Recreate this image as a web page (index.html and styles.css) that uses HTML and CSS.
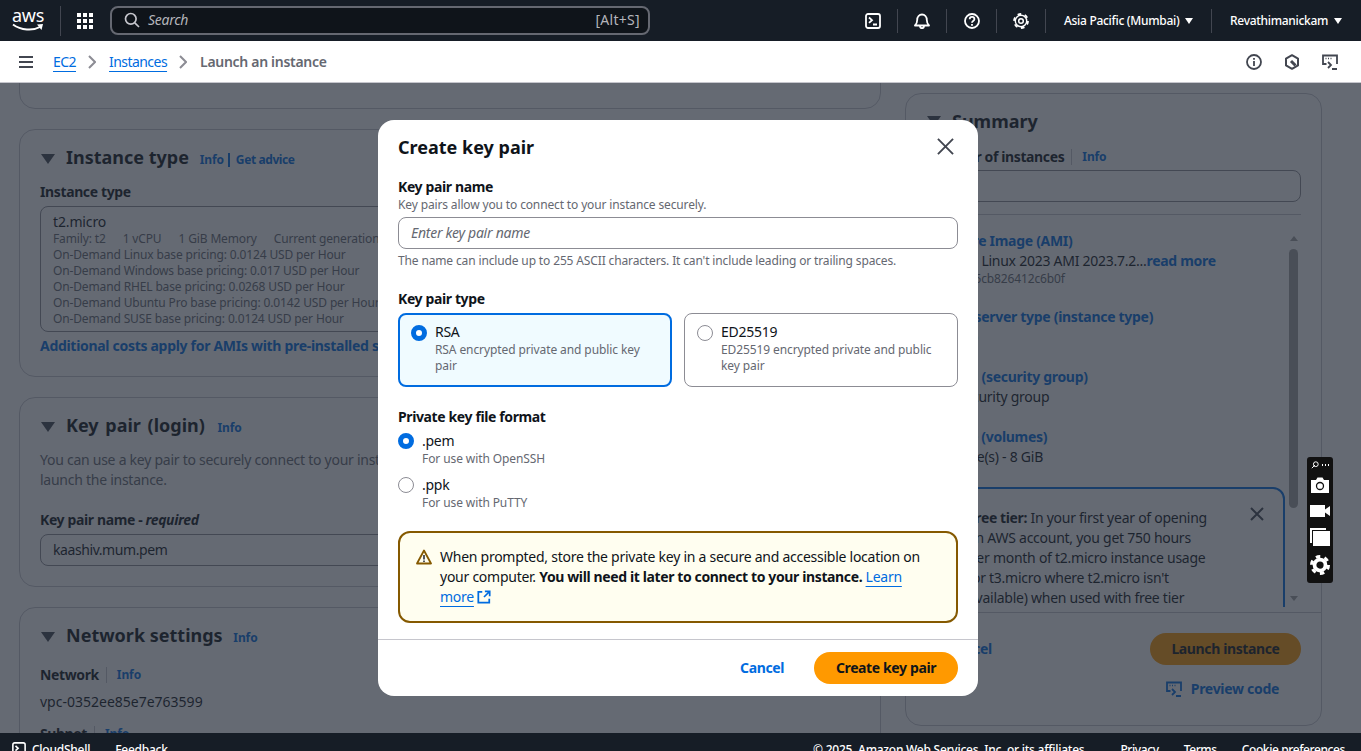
FILE: index.html

```html
<!DOCTYPE html>
<html>
<head>
  <meta charset="utf-8">
  <title>Launch an instance | EC2</title>
  <link rel="stylesheet" href="styles.css">
</head>
<body>
  <header class="topbar">
    <a class="aws-logo">
      <span class="aws-word">aws</span>
      <svg class="aws-smile" viewBox="0 0 32 9"><path d="M1 1.5c8 6 20 6.500 27 2.500" fill="none" stroke="#fff" stroke-width="2"/><path d="M25 1.500l6 -0.500-1.500 6z" fill="#fff"/></svg>
    </a>
    <span class="top-sep first"></span>
    <svg class="grid-icon" viewBox="0 0 16 16" fill="#fff">
      <rect x="0" y="0" width="4" height="4"/><rect x="6" y="0" width="4" height="4"/><rect x="12" y="0" width="4" height="4"/>
      <rect x="0" y="6" width="4" height="4"/><rect x="6" y="6" width="4" height="4"/><rect x="12" y="6" width="4" height="4"/>
      <rect x="0" y="12" width="4" height="4"/><rect x="6" y="12" width="4" height="4"/><rect x="12" y="12" width="4" height="4"/>
    </svg>
    <div class="search">
      <svg class="icon-16" viewBox="0 0 16 16" fill="none" stroke="#c6c6cd" stroke-width="1.700"><circle cx="6.800" cy="6.800" r="5.300"/><path d="M10.800 10.800L15 15"/></svg>
      <span class="search-text">Search</span>
      <span class="search-key">[Alt+S]</span>
    </div>
    <div class="top-actions">
      <a class="top-icon"><svg class="icon-16" viewBox="0 0 16 16" fill="none" stroke="#fff" stroke-width="1.800"><rect x="1" y="1" width="14" height="14" rx="2"/><path d="M4 4.500l3 2.700-3 2.700M8 11.500h4"/></svg></a>
      <a class="top-icon"><svg class="icon-16" viewBox="0 0 16 16" fill="none" stroke="#fff" stroke-width="1.800" stroke-linejoin="round"><path d="M1 12.500h14c-1.500-1.500-2.200-2.500-2.200-5.500 0-3-2-5.500-4.800-5.500S3.200 4 3.200 7c0 3-.7 4-2.200 5.500z"/><path d="M6 13c0 3 4 3 4 0"/></svg></a>
      <a class="top-icon"><svg class="icon-16" viewBox="0 0 16 16" fill="none" stroke="#fff" stroke-width="1.800"><circle cx="8" cy="8" r="7"/><path d="M5.700 6.200c0-3 4.700-3 4.700 0 0 1.900-2.400 1.800-2.400 3.500"/><path d="M8 11v1.700"/></svg></a>
      <a class="top-icon"><svg class="icon-16" viewBox="0 0 16 16" fill="none" stroke="#fff"><circle cx="8" cy="8" r="5.700" stroke-width="1.400"/><circle cx="8" cy="8" r="7" stroke-width="1.800" stroke-dasharray="3.660 3.670"/><circle cx="8" cy="8" r="2.300" stroke-width="1.500"/></svg></a>
      <a class="top-menu region">Asia Pacific (Mumbai)<span class="menu-caret"></span></a>
      <a class="top-menu account">Revathimanickam<span class="menu-caret"></span></a>
    </div>
  </header>

  <nav class="crumbbar">
    <svg class="menu-icon" viewBox="0 0 14 12" fill="none" stroke="#424650" stroke-width="2"><path d="M0 1h14M0 6h14M0 11h14"/></svg>
    <a class="crumb-link">EC2</a>
    <svg class="crumb-chev" viewBox="0 0 8 14" fill="none" stroke="#8c8c94" stroke-width="2"><path d="M1 1l6 6-6 6"/></svg>
    <a class="crumb-link">Instances</a>
    <svg class="crumb-chev" viewBox="0 0 8 14" fill="none" stroke="#8c8c94" stroke-width="2"><path d="M1 1l6 6-6 6"/></svg>
    <span class="crumb-current">Launch an instance</span>
    <div class="crumb-tools">
      <svg class="icon-16" viewBox="0 0 16 16" fill="none" stroke="#424650" stroke-width="1.800"><circle cx="8" cy="8" r="7"/><path d="M8 7v5M8 4v1.800"/></svg>
      <svg class="icon-16" viewBox="0 0 16 16" fill="none" stroke="#424650" stroke-width="2" stroke-linejoin="round"><path d="M8 1.200l6 3.400v6.800l-6 3.400-6-3.400V4.600z"/><path d="M7 7l4.500 4.500" stroke-width="3"/></svg>
      <svg class="icon-16" viewBox="0 0 16 16" fill="none" stroke="#424650" stroke-width="1.800"><path d="M15 10V1.500H1V10h3.500"/><path d="M6 8l3 3-3 3M10 15h5"/><path d="M3.500 4.500h1M6 4.500h1M8.500 4.500h1" stroke-width="1.500"/></svg>
    </div>
  </nav>

  <div class="main">
    <div class="page-grid">
      <div class="left-col">
        <section class="card stub-card"></section>

        <section class="card type-card">
          <h2 class="card-head"><span class="caret"></span>Instance type <span class="info">Info</span> <span class="info advice">Get advice</span></h2>
          <div class="field-label">Instance type</div>
          <div class="type-select">
            <div class="type-name">t2.micro</div>
            <div class="type-meta"><span>Family: t2</span><span>1 vCPU</span><span>1 GiB Memory</span><span>Current generation: true</span></div>
            <div class="type-line">On-Demand Linux base pricing: 0.0124 USD per Hour</div>
            <div class="type-line">On-Demand Windows base pricing: 0.017 USD per Hour</div>
            <div class="type-line">On-Demand RHEL base pricing: 0.0268 USD per Hour</div>
            <div class="type-line">On-Demand Ubuntu Pro base pricing: 0.0142 USD per Hour</div>
            <div class="type-line">On-Demand SUSE base pricing: 0.0124 USD per Hour</div>
          </div>
          <a class="strong-link">Additional costs apply for AMIs with pre-installed software</a>
        </section>

        <section class="card login-card">
          <h2 class="card-head login-head"><span class="caret"></span>Key pair (login) <span class="info">Info</span></h2>
          <p class="login-text">You can use a key pair to securely connect to your instance. Ensure that you have access to the selected key pair before you<br>launch the instance.</p>
          <div class="field-label login-label">Key pair name - <em>required</em></div>
          <div class="login-select">kaashiv.mum.pem</div>
        </section>

        <section class="card network-card">
          <h2 class="card-head"><span class="caret"></span>Network settings <span class="info">Info</span></h2>
          <div class="field-label inline-label"><span>Network</span><span class="label-sep"></span><span class="info">Info</span></div>
          <div class="net-value">vpc-0352ee85e7e763599</div>
          <div class="field-label inline-label subnet"><span>Subnet</span><span class="label-sep"></span><span class="info">Info</span></div>
        </section>
      </div>

      <aside class="card summary">
        <h2 class="card-head summary-head"><span class="caret"></span>Summary</h2>
        <div class="field-label inline-label count-label"><span>Number of instances</span><span class="label-sep"></span><span class="info">Info</span></div>
        <div class="count-input">1</div>
        <div class="summary-line"></div>
        <div class="summary-scroll">
          <a class="strong-link sum-title">Software Image (AMI)</a>
          <div class="sum-text">Amazon Linux 2023 AMI 2023.7.2...<a class="strong-link">read more</a></div>
          <div class="sum-id">ami-0f555cb826412c6b0f</div>
          <a class="strong-link sum-title next">Virtual server type (instance type)</a>
          <div class="sum-text">t2.micro</div>
          <a class="strong-link sum-title next">Firewall (security group)</a>
          <div class="sum-text">New security group</div>
          <a class="strong-link sum-title next">Storage (volumes)</a>
          <div class="sum-text">1 volume(s) - 8 GiB</div>
          <div class="free-tier">
            <svg class="free-close" viewBox="0 0 14 14" fill="none" stroke="#424650" stroke-width="2"><path d="M1 1l12 12M13 1L1 13"/></svg>
            <p><b>Free tier:</b> In your first year of opening<br>an AWS account, you get 750 hours<br>per month of t2.micro instance usage<br>(or t3.micro where t2.micro isn't<br>available) when used with free tier</p>
          </div>
          <div class="fake-scroll">
            <span class="scroll-up"></span>
            <span class="scroll-thumb"></span>
            <span class="scroll-down"></span>
          </div>
        </div>
        <div class="summary-foot">
          <div class="foot-row">
            <a class="strong-link">Cancel</a>
            <span class="launch-btn">Launch instance</span>
          </div>
          <a class="strong-link preview">
            <svg class="icon-16" viewBox="0 0 16 16" fill="none" stroke="#006ce0" stroke-width="1.800"><path d="M15 10V1.500H1V10h3.500"/><path d="M6 8l3 3-3 3M10 15h5"/><path d="M3.500 4.500h1M6 4.500h1M8.500 4.500h1" stroke-width="1.500"/></svg>
            Preview code
          </a>
        </div>
      </aside>
    </div>

    <div class="overlay">
      <div class="modal">
        <div class="modal-head">
          <h2>Create key pair</h2>
          <svg class="modal-close" viewBox="0 0 18 18" fill="none" stroke="#424650" stroke-width="2"><path d="M1 1l16 16M17 1L1 17"/></svg>
        </div>
        <div class="modal-body">
          <label class="m-label" for="key-name">Key pair name</label>
          <div class="m-desc">Key pairs allow you to connect to your instance securely.</div>
          <input class="m-input" id="key-name" type="text" placeholder="Enter key pair name">
          <div class="m-desc hint">The name can include up to 255 ASCII characters. It can't include leading or trailing spaces.</div>

          <div class="m-label type-label">Key pair type</div>
          <div class="tiles">
            <label class="tile selected">
              <input type="radio" name="kind" checked>
              <span class="tile-text"><span class="opt-name">RSA</span><span class="opt-desc">RSA encrypted private and public key pair</span></span>
            </label>
            <label class="tile">
              <input type="radio" name="kind">
              <span class="tile-text"><span class="opt-name">ED25519</span><span class="opt-desc">ED25519 encrypted private and public key pair</span></span>
            </label>
          </div>

          <div class="m-label format-label">Private key file format</div>
          <label class="format-opt">
            <input type="radio" name="format" checked>
            <span class="tile-text"><span class="opt-name">.pem</span><span class="opt-desc">For use with OpenSSH</span></span>
          </label>
          <label class="format-opt">
            <input type="radio" name="format">
            <span class="tile-text"><span class="opt-name">.ppk</span><span class="opt-desc">For use with PuTTY</span></span>
          </label>

          <div class="alert">
            <svg class="alert-icon" viewBox="0 0 16 16" fill="none" stroke="#855900" stroke-width="1.800" stroke-linejoin="round"><path d="M8 1.500L15 14.500H1z"/><path d="M8 6v4.500M8 11.500v1.500" stroke="#424650"/></svg>
            <p>When prompted, store the private key in a secure and accessible location on your computer. <b>You will need it later to connect to your instance.</b> <a class="alert-link">Learn more</a> <svg class="ext-icon" viewBox="0 0 16 16" fill="none" stroke="#006ce0" stroke-width="2"><path d="M6 2H1.500v12.500H14V10"/><path d="M8 8l6-6M9 1.500h5.500V7"/></svg></p>
          </div>
        </div>
        <div class="modal-foot">
          <a class="m-cancel">Cancel</a>
          <button class="m-create">Create key pair</button>
        </div>
      </div>
    </div>

    <div class="capture-bar">
      <div class="capture-top">
        <svg class="capture-link" viewBox="0 0 10 10" fill="none" stroke="#fff" stroke-width="1.200"><circle cx="6" cy="4" r="3"/><path d="M1 9l4-4"/></svg>
        <span class="capture-dots"></span>
      </div>
      <svg class="capture-icon" viewBox="0 0 20 16"><path d="M1 3h5l1.500-2.500h5L14 3h5v13H1z" fill="#fff"/><circle cx="10" cy="9" r="3.500" fill="none" stroke="#111" stroke-width="1.300"/></svg>
      <svg class="capture-icon" viewBox="0 0 20 16"><path d="M0 2h15v12H0zM15 6.500L20 3v10l-5-3.500z" fill="#fff"/></svg>
      <svg class="capture-icon" viewBox="0 0 20 18"><path d="M0 0h16v2H2v13H0z" fill="#fff"/><path d="M3 3h17v15H3z" fill="#fff"/></svg>
      <svg class="capture-icon gear" viewBox="0 0 16 16" fill="none" stroke="#fff"><circle cx="8" cy="8" r="4.400" stroke-width="3"/><circle cx="8" cy="8" r="6.800" stroke-width="2.400" stroke-dasharray="3.560 3.560"/></svg>
    </div>
  </div>

  <footer class="bottombar">
    <svg class="shell-icon" viewBox="0 0 16 16" fill="none" stroke="#fff" stroke-width="1.800"><rect x="1" y="1" width="14" height="14" rx="2"/><path d="M4 4.500l3 2.700-3 2.700M8 11.500h4"/></svg>
    <a class="cloudshell">CloudShell</a>
    <a class="feedback">Feedback</a>
    <div class="bottom-right">
      <span class="copyright">© 2025, Amazon Web Services, Inc. or its affiliates.</span>
      <a>Privacy</a>
      <a>Terms</a>
      <a>Cookie preferences</a>
    </div>
  </footer>
</body>
</html>
```

FILE: styles.css

```css
* {
  box-sizing: border-box;
}
html, body {
  height: 100%;
}
body {
  margin: 0;
  display: flex;
  flex-direction: column;
  overflow: hidden;
  font-family: "Noto Sans", "Open Sans", sans-serif;
  font-size: 14px;
  line-height: 20px;
  letter-spacing: -0.26px;
  color: #0f141a;
  background: #fff;
}
b {
  font-weight: 700;
  letter-spacing: -0.38px;
}
.icon-16 {
  width: 16px;
  height: 16px;
  flex: none;
}

/* top bar */
.topbar {
  height: 41px;
  flex: none;
  display: flex;
  align-items: center;
  padding-left: 12px;
  background: #161d26;
  color: #fff;
}
.aws-logo {
  width: 32px;
  height: 30px;
  display: flex;
  flex-direction: column;
  align-items: center;
}
.aws-word {
  font-size: 18px;
  line-height: 18px;
  letter-spacing: -0.3px;
}
.aws-smile {
  width: 32px;
  height: 9px;
  margin-top: -1px;
}
.top-sep.first {
  width: 1px;
  height: 30px;
  margin-left: 16px;
  background: #424650;
}
.grid-icon {
  width: 16px;
  height: 16px;
  margin-left: 16px;
}
.search {
  width: 540px;
  height: 29px;
  margin-left: 17px;
  padding: 0 8px 2px 12px;
  display: flex;
  align-items: center;
  gap: 8px;
  background: #0f141a;
  border: 2px solid #656871;
  border-radius: 8px;
  color: #b4b4bb;
}
.search-text {
  flex: 1;
  font-style: italic;
}
.search-key {
  letter-spacing: 0.3px;
}
.top-actions {
  margin-left: auto;
  display: flex;
  align-items: center;
  height: 100%;
}
.top-icon {
  width: 49.500px;
  height: 24px;
  padding-left: 1px;
  display: flex;
  align-items: center;
  justify-content: center;
  border-right: 1px solid #424650;
}
.top-menu {
  height: 24px;
  display: flex;
  align-items: center;
  font-size: 12px;
  font-weight: 500;
  letter-spacing: -0.3px;
}
.region {
  width: 166px;
  padding-left: 18px;
  border-right: 1px solid #424650;
}
.account {
  width: 149px;
  padding-left: 18px;
}
.menu-caret {
  width: 0;
  height: 0;
  margin-left: 6px;
  border-left: 4.500px solid transparent;
  border-right: 4.500px solid transparent;
  border-top: 6px solid #fff;
}

/* breadcrumb bar */
.crumbbar {
  height: 42px;
  flex: none;
  display: flex;
  align-items: center;
  padding: 0 23px 0 19px;
  background: #fff;
  border-bottom: 1px solid #c6c6cd;
}
.menu-icon {
  width: 14px;
  height: 12px;
  margin-right: 20px;
}
.crumb-link {
  color: #006ce0;
  text-decoration: underline;
  text-underline-offset: 4px;
  letter-spacing: -0.55px;
}
.crumb-chev {
  width: 8px;
  height: 14px;
  margin: 0 13px 0 12px;
}
.crumb-current {
  font-weight: 600;
  color: #656871;
  letter-spacing: -0.3px;
}
.crumb-tools {
  margin-left: auto;
  display: flex;
  gap: 22px;
}

/* page behind the dialog */
.main {
  flex: 1;
  min-height: 0;
  position: relative;
  overflow: hidden;
}
.page-grid {
  display: grid;
  grid-template-columns: 862px 417px;
  gap: 24px;
  padding-left: 19px;
}
.left-col {
  display: flex;
  flex-direction: column;
  gap: 20px;
}
.card {
  border: 1px solid #c6c6cd;
  border-radius: 16px;
  background: #fff;
  padding: 0 20px;
}
.stub-card {
  height: 80px;
  margin-top: -54px;
}
.card-head {
  margin: 0;
  display: flex;
  align-items: baseline;
  font-size: 18px;
  line-height: 24px;
  font-weight: 700;
  letter-spacing: 0;
  white-space: pre;
}
.login-head {
  word-spacing: 2px;
}
.caret {
  width: 0;
  height: 0;
  margin: 0 11px 0 1px;
  align-self: center;
  border-left: 7px solid transparent;
  border-right: 7px solid transparent;
  border-top: 10px solid #424650;
}
.info {
  font-size: 12px;
  font-weight: 700;
  letter-spacing: -0.1px;
  color: #006ce0;
  margin-left: 6px;
}
.advice {
  margin-left: 4px;
  padding-left: 6px;
  border-left: 2px solid #006ce0;
  line-height: 14px;
  letter-spacing: -0.4px;
}
.field-label {
  font-weight: 700;
  letter-spacing: -0.38px;
}
.inline-label {
  display: flex;
  align-items: center;
}
.inline-label .info {
  margin-left: 0;
}
.label-sep {
  width: 1px;
  height: 16px;
  margin: 0 10px 0 7px;
  background: #c6c6cd;
}
.strong-link {
  color: #006ce0;
  font-weight: 700;
  letter-spacing: -0.3px;
}
.type-card {
  height: 248px;
  padding-top: 15px;
}
.type-card .field-label {
  margin-top: 10px;
}
.type-select {
  height: 126px;
  margin: 4px 0 4px;
  padding: 4px 12px;
  border: 1px solid #8c8c94;
  border-radius: 8px;
  color: #656871;
  font-size: 12px;
  line-height: 16px;
  letter-spacing: -0.14px;
}
.type-name {
  padding-top: 1px;
  font-size: 14px;
  line-height: 19px;
  color: #0f141a;
}
.type-meta {
  display: flex;
  gap: 17px;
}
.login-card {
  height: 190px;
  padding-top: 15px;
}
.login-text {
  margin: 10px 0 0;
  color: #656871;
}
.login-label {
  margin-top: 20px;
}
.login-select {
  height: 32px;
  margin-top: 4px;
  padding: 5px 12px;
  border: 1px solid #8c8c94;
  border-radius: 8px;
  letter-spacing: -0.42px;
}
.network-card {
  height: 180px;
  padding-top: 15px;
}
.network-card .inline-label {
  margin-top: 15px;
}
.net-value {
  margin-top: 7px;
  letter-spacing: 0;
}
.network-card .inline-label.subnet {
  margin-top: 12px;
}

/* summary column */
.summary {
  height: 633px;
  margin-top: 10px;
  padding-top: 15px;
  display: flex;
  flex-direction: column;
}
.summary-head {
  margin-bottom: 14px;
}
.count-input {
  height: 32px;
  margin-top: 3px;
  padding: 5px 12px;
  border: 1px solid #8c8c94;
  border-radius: 8px;
}
.summary-line {
  height: 1px;
  margin-top: 12px;
  background: #c6c6cd;
}
.summary-scroll {
  position: relative;
  height: 392px;
  flex: none;
  overflow: hidden;
  padding: 16px 0 0;
}
.sum-title {
  display: block;
}
.sum-title.next {
  margin-top: 20px;
}
.sum-id {
  font-size: 12px;
  line-height: 16px;
  letter-spacing: -0.14px;
  color: #656871;
}
.free-tier {
  position: relative;
  width: 359px;
  height: 180px;
  margin-top: 20px;
  padding: 19px 20px 0 40px;
  border: 2px solid #006ce0;
  border-radius: 12px;
}
.free-tier p {
  margin: 0;
}
.free-close {
  position: absolute;
  top: 18px;
  right: 19px;
  width: 14px;
  height: 14px;
}
.fake-scroll {
  position: absolute;
  top: 21px;
  right: 3px;
  bottom: 0;
  width: 9px;
  display: flex;
  flex-direction: column;
  align-items: center;
}
.scroll-up, .scroll-down {
  width: 0;
  height: 0;
  border-left: 4.500px solid transparent;
  border-right: 4.500px solid transparent;
}
.scroll-up {
  border-bottom: 5px solid #a0a0a0;
}
.scroll-down {
  margin-top: auto;
  margin-bottom: 6px;
  border-top: 5px solid #a0a0a0;
}
.scroll-thumb {
  width: 9px;
  height: 259px;
  margin-top: 8px;
  border-radius: 5px;
  background: #a0a0a0;
}
.summary-foot {
  margin: 5px -20px 0;
  padding: 20px 20px 0;
  border-top: 1px solid #c6c6cd;
}
.foot-row {
  display: flex;
  align-items: center;
  justify-content: flex-end;
  gap: 158px;
}
.launch-btn {
  width: 151px;
  height: 32px;
  display: flex;
  align-items: center;
  justify-content: center;
  border-radius: 16px;
  background: #ff9900;
  font-weight: 700;
  letter-spacing: -0.38px;
}
.preview {
  margin-top: 14px;
  padding-right: 22px;
  display: flex;
  justify-content: flex-end;
  align-items: center;
  gap: 9px;
}

/* dialog */
.overlay {
  position: absolute;
  inset: 0;
  display: flex;
  justify-content: center;
  align-items: flex-start;
  padding: 37px 5px 0 0;
  background: rgba(35, 43, 55, 0.7);
}
.modal {
  width: 600px;
  height: 576px;
  display: flex;
  flex-direction: column;
  background: #fff;
  border-radius: 16px;
}
.modal-head {
  height: 55px;
  flex: none;
  padding: 0 24px 2px 20px;
  display: flex;
  align-items: center;
  justify-content: space-between;
}
.modal-head h2 {
  margin: 0;
  font-size: 18px;
  line-height: 24px;
  font-weight: 700;
  letter-spacing: 0;
}
.modal-close {
  width: 17px;
  height: 17px;
}
.modal-body {
  flex: 1;
  padding: 2px 20px 0;
}
.m-label {
  display: block;
  font-weight: 700;
  letter-spacing: -0.38px;
}
.m-desc {
  font-size: 12px;
  line-height: 16px;
  letter-spacing: -0.14px;
  color: #656871;
}
.hint {
  margin-top: 4px;
}
.m-input {
  display: block;
  width: 100%;
  height: 32px;
  margin-top: 4px;
  padding: 0 12px 2px;
  border: 1px solid #8c8c94;
  border-radius: 8px;
  font: inherit;
  letter-spacing: inherit;
}
.m-input::placeholder {
  font-style: italic;
  color: #656871;
}
.type-label {
  margin-top: 20px;
}
.tiles {
  display: grid;
  grid-template-columns: 1fr 1fr;
  gap: 12px;
  margin-top: 4px;
}
.tile {
  height: 74px;
  padding: 8px 12px;
  display: flex;
  gap: 8px;
  border: 1px solid #8c8c94;
  border-radius: 8px;
}
.tile.selected {
  background: #f0fbff;
  border: 2px solid #006ce0;
  padding: 7px 11px;
}
input[type="radio"] {
  appearance: none;
  width: 16px;
  height: 16px;
  flex: none;
  margin: 2px 0 0;
  border: 1px solid #8c8c94;
  border-radius: 50%;
  background: #fff;
}
.tile input[type="radio"] {
  margin-top: 3px;
}
input[type="radio"]:checked {
  border: 5px solid #006ce0;
}
.tile-text {
  display: flex;
  flex-direction: column;
}
.opt-desc {
  font-size: 12px;
  line-height: 16px;
  letter-spacing: -0.1px;
  color: #656871;
}
.format-label {
  margin-top: 20px;
}
.format-opt {
  display: flex;
  gap: 8px;
  margin-top: 4px;
  height: 40px;
}
.alert {
  height: 92px;
  margin-top: 16px;
  padding: 14px 24px 14px 16px;
  display: flex;
  gap: 8px;
  background: #fffef0;
  border: 2px solid #855900;
  border-radius: 12px;
}
.alert p {
  margin: 0;
}
.alert-icon {
  width: 16px;
  height: 16px;
  flex: none;
  margin-top: 2px;
}
.alert-link {
  color: #006ce0;
  text-decoration: underline;
  text-underline-offset: 4px;
}
.ext-icon {
  width: 14px;
  height: 14px;
  vertical-align: -2px;
}
.modal-foot {
  height: 57px;
  flex: none;
  padding: 12px 20px 12px;
  display: flex;
  justify-content: flex-end;
  align-items: center;
  gap: 30px;
  border-top: 1px solid #c6c6cd;
}
.m-cancel {
  color: #006ce0;
  font-weight: 700;
  letter-spacing: -0.38px;
}
.m-create {
  width: 144px;
  height: 32px;
  border: none;
  border-radius: 16px;
  background: #ff9900;
  color: #0f141a;
  font: inherit;
  font-weight: 700;
  letter-spacing: -0.38px;
}

/* screen capture widget from a browser extension */
.capture-bar {
  position: absolute;
  left: 1307px;
  top: 374px;
  width: 26px;
  height: 126px;
  padding: 4px 3px;
  display: flex;
  flex-direction: column;
  align-items: center;
  gap: 6px;
  background: #111;
  border-radius: 3px;
}
.capture-top {
  display: flex;
  align-items: center;
  gap: 2px;
  height: 8px;
}
.capture-link {
  width: 8px;
  height: 8px;
}
.capture-dots {
  width: 8px;
  height: 2px;
  background-image: radial-gradient(circle, #fff 1px, transparent 1px);
  background-size: 3px 2px;
}
.capture-icon {
  width: 20px;
  height: 20px;
}
.capture-icon.gear {
  margin-top: 2px;
}

/* bottom bar */
.bottombar {
  height: 18px;
  flex: none;
  display: flex;
  align-items: flex-start;
  padding: 9px 16px 0 12px;
  overflow: hidden;
  background: #161d26;
  color: #fff;
  font-size: 12px;
  line-height: 16px;
  font-weight: 500;
  letter-spacing: -0.25px;
}
.shell-icon {
  width: 14px;
  height: 14px;
  flex: none;
}
.cloudshell {
  margin-left: 6px;
}
.feedback {
  margin-left: 25px;
}
.bottom-right {
  margin-left: auto;
  display: flex;
  gap: 25px;
  letter-spacing: -0.4px;
}
.copyright {
  margin-right: 8px;
  letter-spacing: -0.25px;
}
```
